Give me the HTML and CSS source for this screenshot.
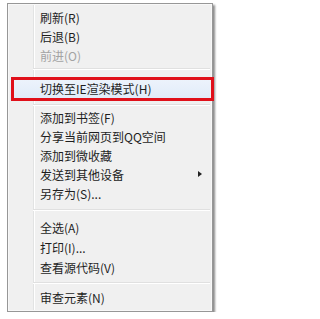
FILE: index.html
```html
<!DOCTYPE html>
<html>
<head>
<meta charset="utf-8">
<link rel="stylesheet" href="styles.css">
</head>
<body>
<div class="menu">
  <div class="group top">
    <div class="item">刷新(R)</div>
    <div class="item">后退(B)</div>
    <div class="item disabled">前进(O)</div>
  </div>
  <div class="sep"></div>
  <div class="item hl">切换至IE渲染模式(H)</div>
  <div class="sep"></div>
  <div class="group">
    <div class="item">添加到书签(F)</div>
    <div class="item">分享当前网页到QQ空间</div>
    <div class="item">添加到微收藏</div>
    <div class="item sub">发送到其他设备<span class="arrow"></span></div>
    <div class="item">另存为(S)...</div>
  </div>
  <div class="sep tall"></div>
  <div class="group lower">
    <div class="item">全选(A)</div>
    <div class="item">打印(I)...</div>
    <div class="item">查看源代码(V)</div>
  </div>
  <div class="sep mid"></div>
  <div class="group lower">
    <div class="item">审查元素(N)</div>
  </div>
</div>
</body>
</html>
```

FILE: styles.css
```css
html, body {
  margin: 0;
  padding: 0;
  background: #ffffff;
}
body {
  font-family: "Noto Sans CJK SC", "Noto Sans", sans-serif;
  font-size: 12px;
  color: #1e1e1e;
}
.menu {
  position: relative;
  box-sizing: border-box;
  margin: 3px 0 0 7px;
  width: 206px;
  height: 309px;
  padding: 4px 2px 0 2px;
  border: 1px solid #979797;
  background:
    linear-gradient(to right, transparent 25px, #e2e3e3 25px, #e2e3e3 26px, #ffffff 26px, #ffffff 27px, transparent 27px),
    #f0f0f0;
  box-shadow: inset 0 0 0 1px #f8f8f8, 2px 2px 2px rgba(0, 0, 0, 0.45);
}
.item {
  position: relative;
  height: 19px;
  line-height: 19px;
  padding-left: 30px;
  white-space: nowrap;
}
.lower .item {
  height: 20px;
  line-height: 20px;
}
.disabled {
  color: #a3a3a3;
}
.sep {
  height: 7px;
  margin-left: 23px;
  background: linear-gradient(to bottom, transparent 3px, #e0e0e0 3px, #e0e0e0 4px, #ffffff 4px, #ffffff 5px, transparent 5px);
}
.sep.tall {
  height: 15px;
  background: linear-gradient(to bottom, transparent 6px, #e0e0e0 6px, #e0e0e0 7px, #ffffff 7px, #ffffff 8px, transparent 8px);
}
.sep.mid {
  height: 10px;
  background: linear-gradient(to bottom, transparent 4px, #e0e0e0 4px, #e0e0e0 5px, #ffffff 5px, #ffffff 6px, transparent 6px);
}
.item.hl {
  margin-top: 5px;
  height: 24px;
  line-height: 24px;
  background: linear-gradient(to bottom, #eef4fc, #dfeaf8);
}
.item.hl::after {
  content: "";
  position: absolute;
  left: 1px;
  right: -4px;
  top: 0;
  bottom: 0;
  border: 3px solid #e0101a;
}
.arrow {
  position: absolute;
  right: 8px;
  top: 6px;
  width: 0;
  height: 0;
  border-left: 4px solid #222;
  border-top: 3.5px solid transparent;
  border-bottom: 3.5px solid transparent;
}
```
